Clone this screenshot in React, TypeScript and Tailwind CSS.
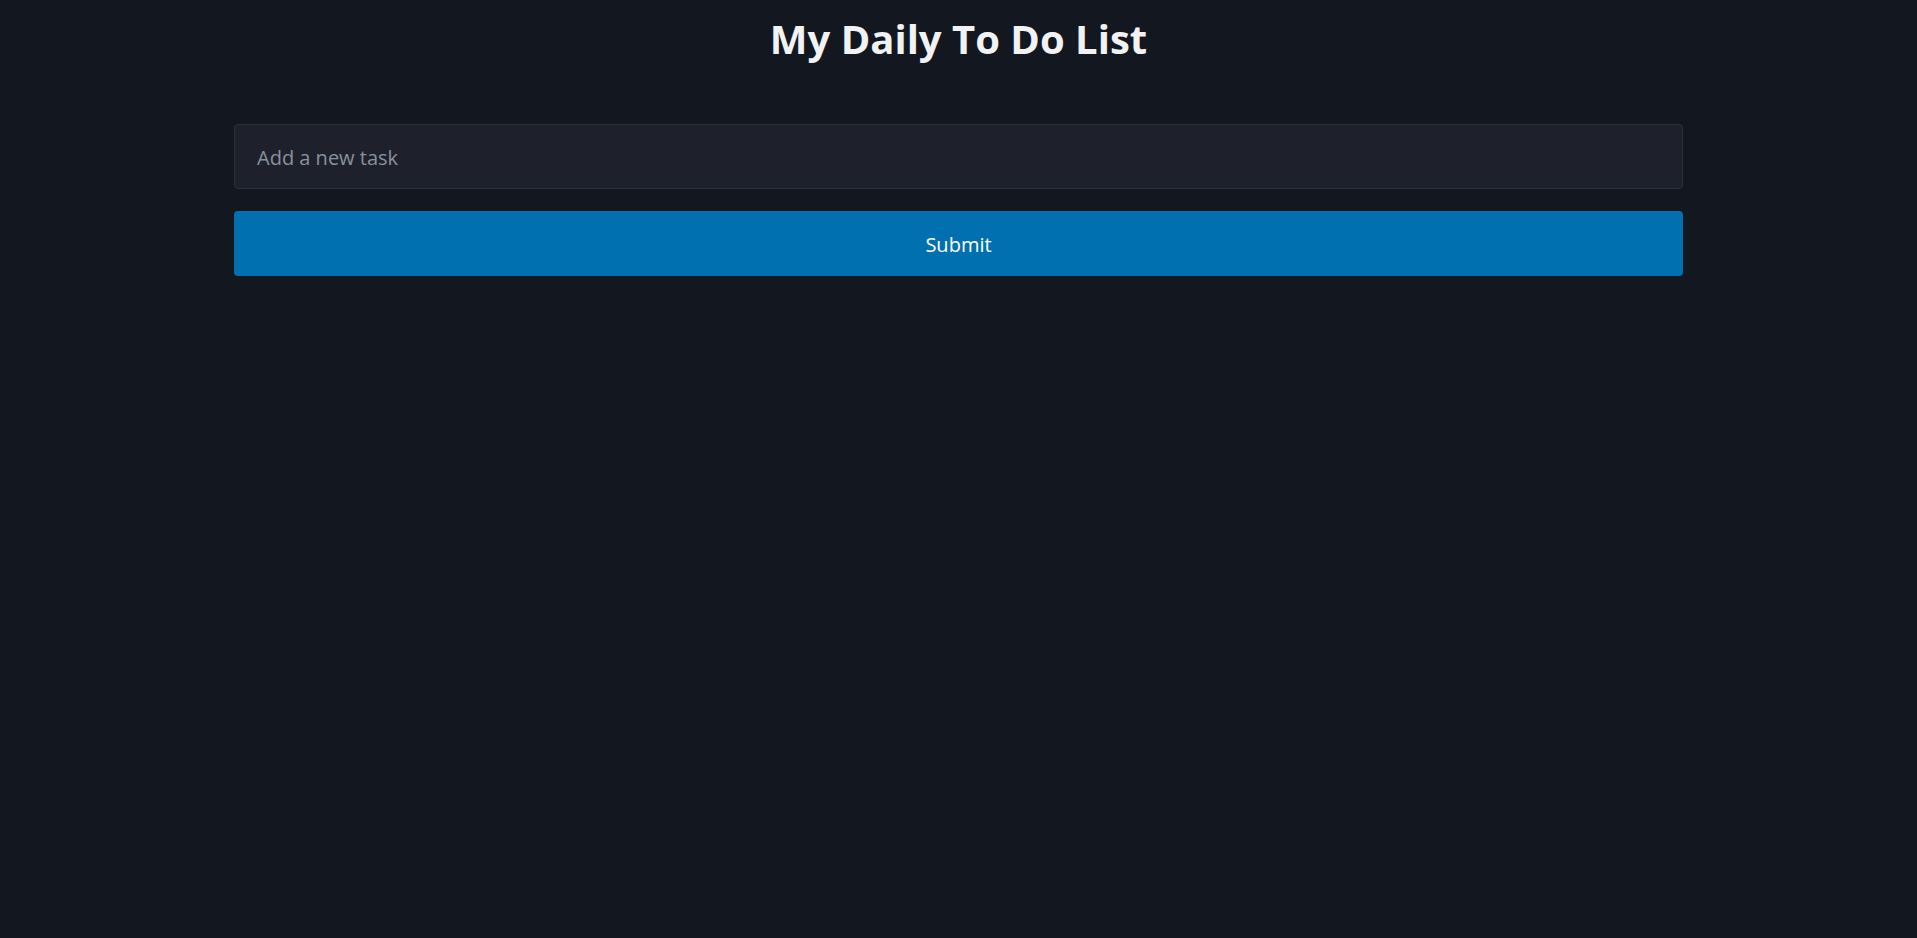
import React from "react";

const App = () => {
  return (
    <div className="min-h-screen bg-[#131720] font-['Open_Sans','Noto_Sans',sans-serif] text-[#f1f2f4]">
      <h1 className="pt-[9px] text-center text-[40px] font-bold leading-[60px]">My Daily To Do List</h1>
      <form className="mx-auto mt-[55px] flex w-[1449px] flex-col gap-[22px]" onSubmit={(e) => e.preventDefault()}>
        <input
          className="h-[65px] rounded-[4px] border border-[#2c303b] bg-[#1e212b] px-[22px] pt-[2px] text-[20px] text-[#e5e7eb] placeholder:text-[#8a909e] outline-none"
          placeholder="Add a new task"
          type="text"
        />
        <button className="h-[65px] rounded-[4px] bg-[#0070b0] pt-[2px] text-[20px] text-white" type="submit">
          Submit
        </button>
      </form>
    </div>
  );
};

export default App;
